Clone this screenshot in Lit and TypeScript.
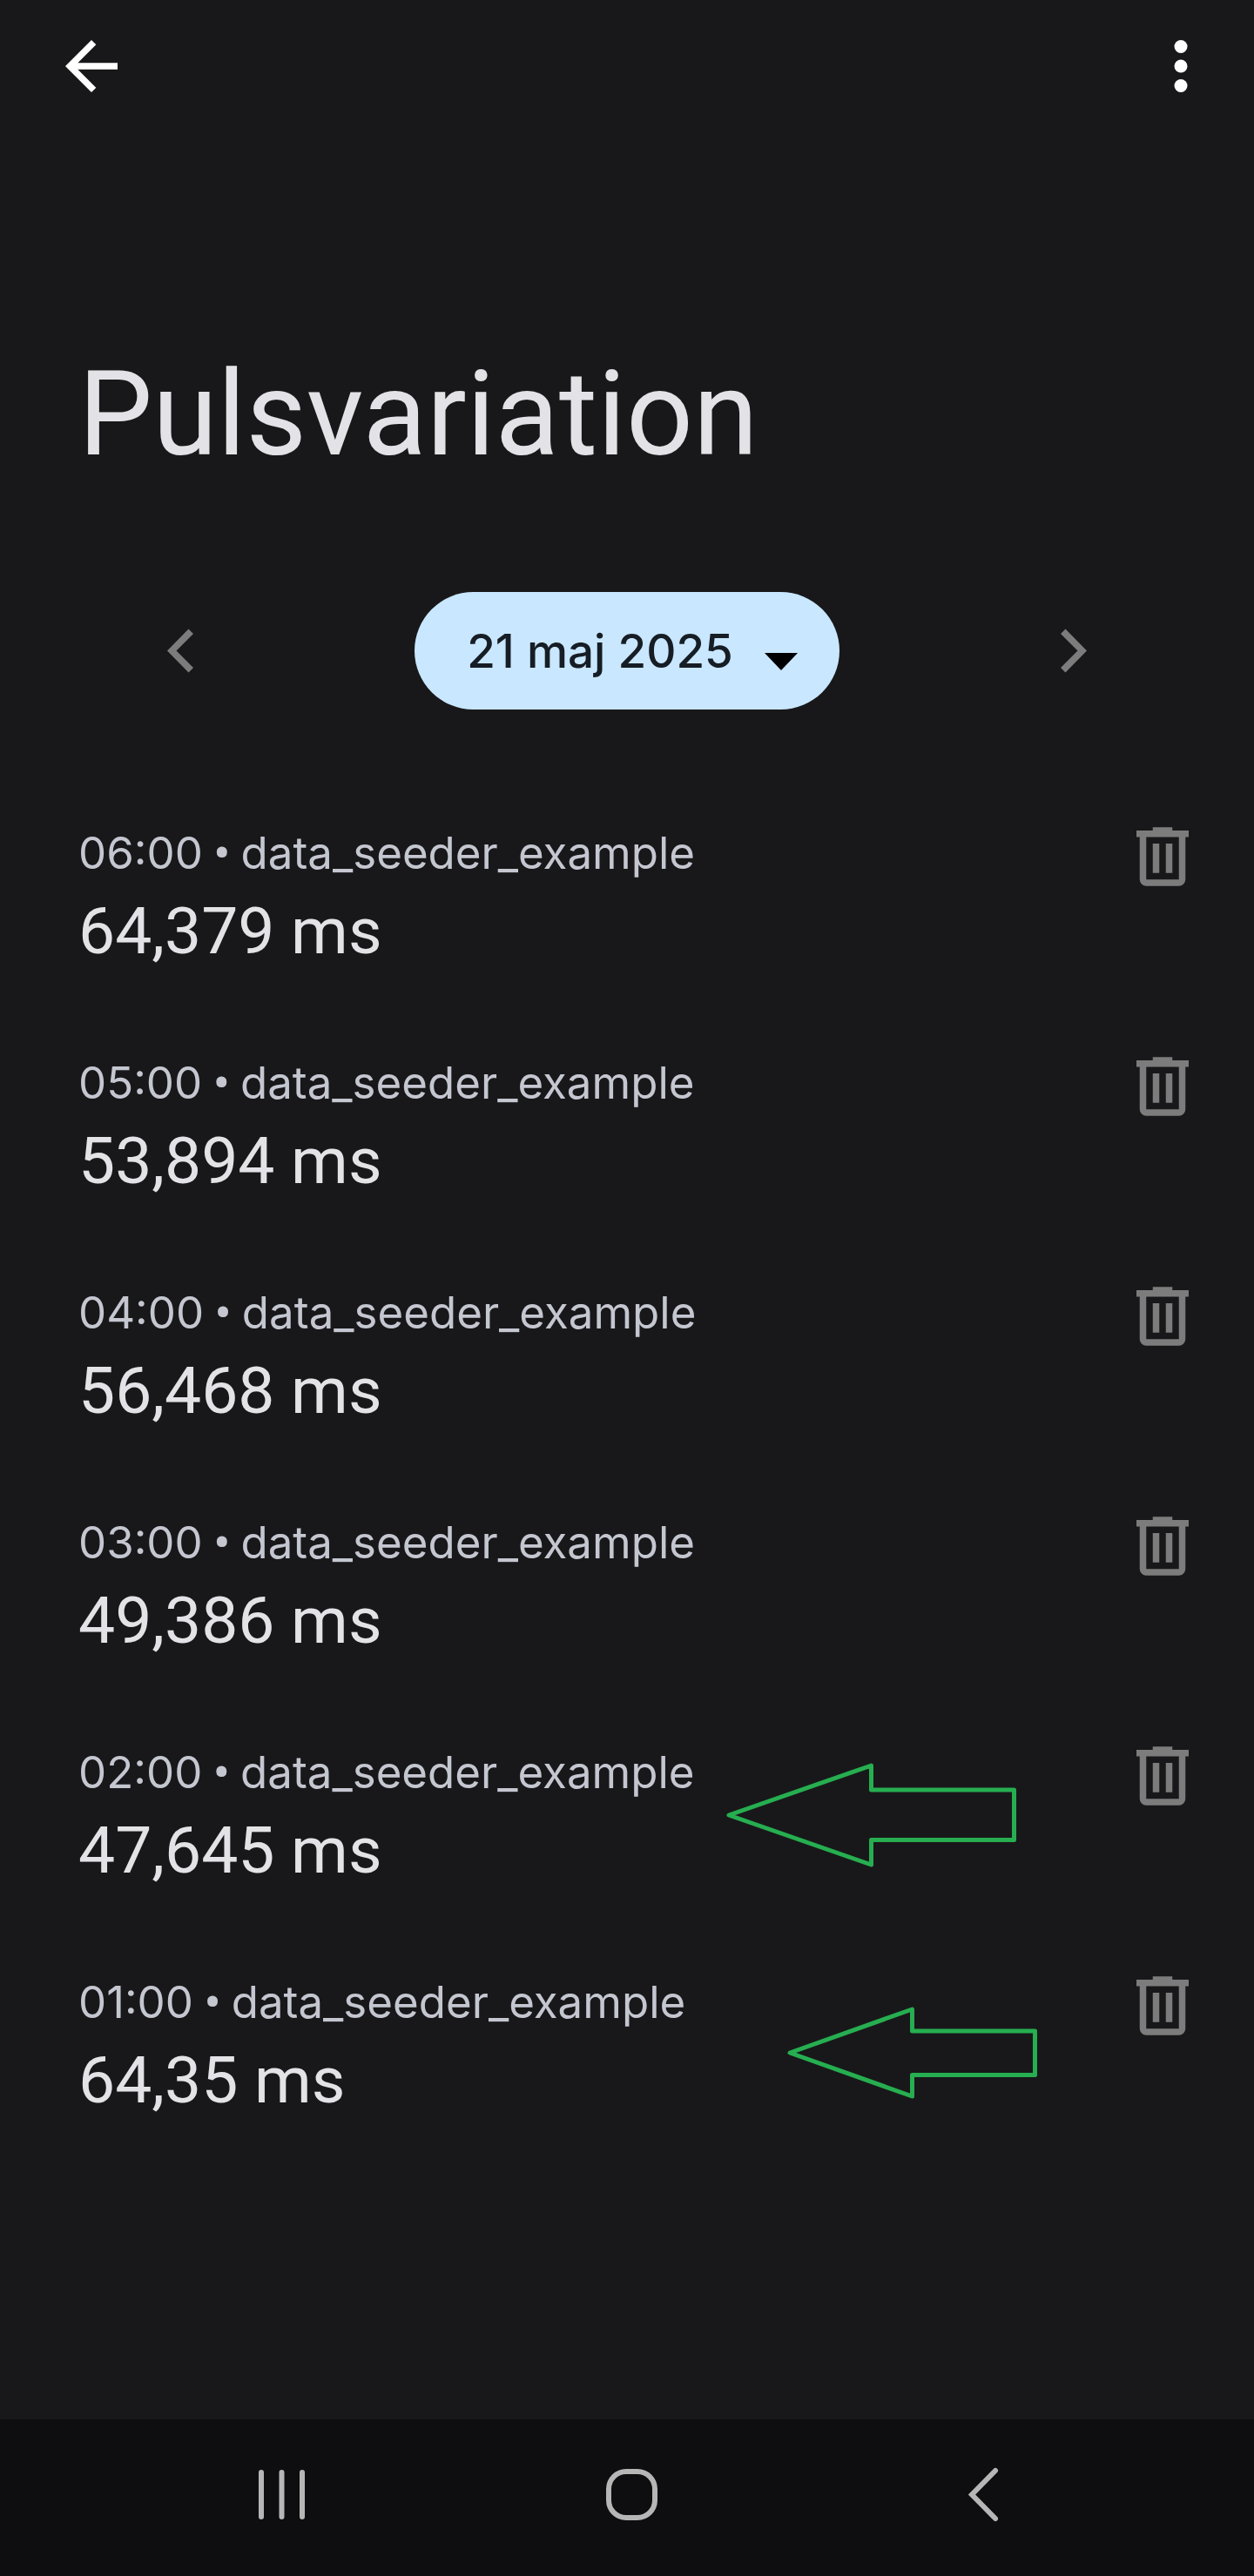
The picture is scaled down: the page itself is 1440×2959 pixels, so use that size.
import { LitElement, html, css } from "lit";
import { customElement, state } from "lit/decorators.js";

interface Reading {
  time: string;
  source: string;
  value: string;
  marker?: "large" | "small";
}

const READINGS: Reading[] = [
  { time: "06:00", source: "data_seeder_example", value: "64,379 ms" },
  { time: "05:00", source: "data_seeder_example", value: "53,894 ms" },
  { time: "04:00", source: "data_seeder_example", value: "56,468 ms" },
  { time: "03:00", source: "data_seeder_example", value: "49,386 ms" },
  { time: "02:00", source: "data_seeder_example", value: "47,645 ms", marker: "large" },
  { time: "01:00", source: "data_seeder_example", value: "64,35 ms", marker: "small" },
];

const icon = (path: string) => html`
  <svg class="icon" viewBox="0 0 24 24" aria-hidden="true"><path d=${path}></path></svg>
`;

const ICON_BACK = "M20 11H7.83l5.59-5.59L12 4l-8 8 8 8 1.41-1.41L7.83 13H20z";
const ICON_TRASH =
  "M7 21q-.825 0-1.412-.587Q5 19.825 5 19V6H4V4h5V3h6v1h5v2h-1v13q0 .825-.587 1.413Q17.825 21 17 21ZM17 6H7v13h10ZM9 17h2V8H9Zm4 0h2V8h-2Z";

@customElement("app-root")
export class AppRoot extends LitElement {
  static styles = css`
    :host {
      display: flex;
      flex-direction: column;
      min-height: 100vh;
      background: #18181a;
      color: #e3e2e6;
      font-family: Roboto, sans-serif;
    }
    button {
      display: block;
      padding: 0;
      border: 0;
      background: none;
      color: inherit;
      font: inherit;
      cursor: pointer;
    }
    svg {
      display: block;
    }
    .icon {
      width: 90px;
      height: 90px;
      fill: currentColor;
    }
    .bar {
      display: flex;
      justify-content: space-between;
      padding: 31px 39px 0 60px;
      color: #fff;
    }
    .content {
      flex: 1;
    }
    .title {
      margin: 273px 90px 0;
      font-size: 135px;
      line-height: 165px;
      font-weight: 400;
    }
    .days {
      display: flex;
      align-items: center;
      justify-content: space-between;
      margin-top: 121px;
      padding: 0 162px;
    }
    .step {
      color: #7c7c7c;
    }
    .date {
      display: flex;
      align-items: center;
      gap: 36px;
      height: 135px;
      padding: 0 48px 0 60px;
      border-radius: 68px;
      background: #c9e7ff;
      color: #161d24;
      font-family: Inter, Roboto, sans-serif;
      font-size: 53px;
      font-weight: 500;
    }
    .caret {
      width: 38px;
      height: 20px;
      margin-top: 24px;
      fill: #000;
    }
    .list {
      margin: 92px 0 0;
      padding: 0;
      list-style: none;
    }
    .row {
      position: relative;
      display: flex;
      justify-content: space-between;
      align-items: flex-start;
      padding: 32px 60px 57px 90px;
    }
    .text {
      padding-top: 3px;
    }
    .label,
    .value {
      margin: 0;
    }
    .label {
      color: #c4c6d0;
      font-family: Inter, Roboto, sans-serif;
      font-size: 51px;
      line-height: 75px;
    }
    .dot {
      font-family: Roboto, sans-serif;
      font-weight: 700;
      line-height: 1;
      white-space: pre;
    }
    .value {
      margin-top: 7px;
      font-size: 75px;
      line-height: 90px;
    }
    .trash {
      color: #7c7c7c;
    }
    .marker {
      position: absolute;
      overflow: visible;
      fill: none;
      stroke: #26ae50;
      stroke-width: 5;
      stroke-linejoin: round;
    }
    .large {
      left: 830px;
      top: 60px;
      width: 340px;
      height: 120px;
    }
    .small {
      left: 900px;
      top: 74px;
      width: 294px;
      height: 106px;
    }
    .system {
      display: grid;
      grid-template-columns: repeat(3, 1fr);
      justify-items: center;
      align-items: center;
      height: 180px;
      padding: 0 110px 0 121px;
      background: #0e0e10;
    }
    .key {
      width: 90px;
      height: 90px;
      fill: none;
      stroke: #b6b6b6;
      stroke-width: 6;
      stroke-linecap: round;
      stroke-linejoin: miter;
    }
  `;

  @state() private readings = READINGS;

  private remove(reading: Reading) {
    this.readings = this.readings.filter((r) => r !== reading);
  }

  private marker(kind: "large" | "small") {
    return kind === "large"
      ? html`<svg class="marker large" viewBox="0 0 340 120" aria-hidden="true">
          <path d="M7 62 170.500 5V33H334.500V90.500H170.500V119Z"></path>
        </svg>`
      : html`<svg class="marker small" viewBox="0 0 294 106" aria-hidden="true">
          <path d="M7 57 147.500 7V32H288.500V82.500H147.500V107Z"></path>
        </svg>`;
  }

  render() {
    return html`
      <header class="bar">
        <button aria-label="Tillbaka">${icon(ICON_BACK)}</button>
        <button aria-label="Fler alternativ">
          <svg class="icon" viewBox="0 0 24 24" aria-hidden="true">
            <circle cx="12" cy="6" r="2"></circle>
            <circle cx="12" cy="12" r="2"></circle>
            <circle cx="12" cy="18" r="2"></circle>
          </svg>
        </button>
      </header>
      <main class="content">
        <h1 class="title">Pulsvariation</h1>
        <div class="days">
          <button class="step" aria-label="Föregående dag">
            <svg class="icon" viewBox="0 0 90 90" aria-hidden="true">
              <path d="M54.500 19.500 60 25 40.500 44.500 60 64 54.500 69.500 30 44.500Z"></path>
            </svg>
          </button>
          <button class="date" aria-haspopup="dialog">
            <span>21 maj 2025</span>
            <svg class="caret" viewBox="0 0 38 20" aria-hidden="true"><path d="M0 0H38L19 20Z"></path></svg>
          </button>
          <button class="step" aria-label="Nästa dag">
            <svg class="icon" viewBox="0 0 90 90" aria-hidden="true">
              <path d="M35.500 19.500 30 25 49.500 44.500 30 64 35.500 69.500 60 44.500Z"></path>
            </svg>
          </button>
        </div>
        <ul class="list">
          ${this.readings.map(
            (r) => html`
              <li class="row">
                <div class="text">
                  <p class="label">${r.time}<span class="dot"> • </span>${r.source}</p>
                  <p class="value">${r.value}</p>
                </div>
                <button class="trash" aria-label="Ta bort ${r.time}" @click=${() => this.remove(r)}>
                  ${icon(ICON_TRASH)}
                </button>
                ${r.marker ? this.marker(r.marker) : null}
              </li>
            `,
          )}
        </ul>
      </main>
      <nav class="system" aria-label="Systemnavigering">
        <button aria-label="Senaste appar">
          <svg class="key" viewBox="0 0 90 90" aria-hidden="true"><path d="M22 16V67M45.500 16V67M69 16V67"></path></svg>
        </button>
        <button aria-label="Startsida">
          <svg class="key" viewBox="0 0 90 90" aria-hidden="true"><rect x="18" y="15" width="53" height="53" rx="20"></rect></svg>
        </button>
        <button aria-label="Bakåt">
          <svg class="key" viewBox="0 0 90 90" aria-hidden="true"><path d="M59 14 32 41.500 59 69"></path></svg>
        </button>
      </nav>
    `;
  }
}
